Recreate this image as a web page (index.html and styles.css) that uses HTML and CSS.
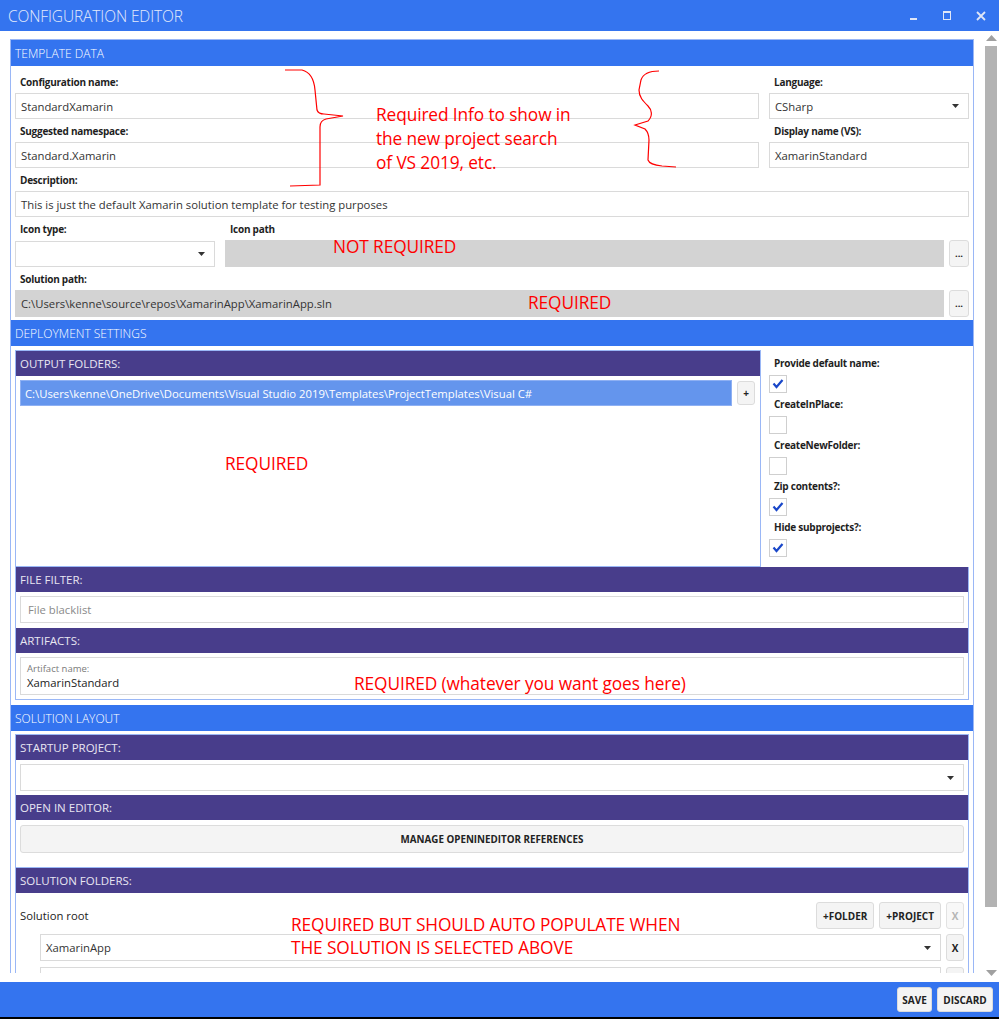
FILE: index.html
```html
<!DOCTYPE html>
<html>
<head>
<meta charset="utf-8">
<link rel="stylesheet" href="styles.css">
</head>
<body>
<div class="window">
  <header class="titlebar">
    <span class="title">CONFIGURATION EDITOR</span>
    <div class="controls">
      <span class="ctl"><svg width="34" height="31"><rect x="14" y="18" width="7" height="2" fill="#dfe6f7"/></svg></span>
      <span class="ctl"><svg width="34" height="31"><rect x="13.5" y="11.5" width="7" height="8" fill="none" stroke="#dfe6f7"/><rect x="13" y="11" width="8" height="2" fill="#dfe6f7"/></svg></span>
      <span class="ctl"><svg width="34" height="31"><path d="M13 12 L21 20 M21 12 L13 20" stroke="#dfe6f7" stroke-width="1.8"/></svg></span>
    </div>
  </header>

  <div class="main">
    <div class="content">
      <div class="viewport">
        <div class="panel">
          <div class="sec-head">TEMPLATE DATA</div>
          <div class="sec-body tmpl">
            <div class="tgrid">
              <div class="lbl">Configuration name:</div>
              <div class="lbl">Language:</div>
              <div class="field">StandardXamarin</div>
              <div class="field combo">CSharp<svg class="arrow" width="7" height="4"><polygon points="0,0 7,0 3.5,4" fill="#333"/></svg></div>
              <div class="lbl">Suggested namespace:</div>
              <div class="lbl">Display name (VS):</div>
              <div class="field">Standard.Xamarin</div>
              <div class="field">XamarinStandard</div>
            </div>
            <div class="lbl">Description:</div>
            <div class="field">This is just the default Xamarin solution template for testing purposes</div>
            <div class="irow">
              <div class="lbl w200">Icon type:</div>
              <div class="lbl">Icon path</div>
            </div>
            <div class="irow inputs">
              <div class="field combo w200"><svg class="arrow" width="7" height="4"><polygon points="0,0 7,0 3.5,4" fill="#333"/></svg></div>
              <div class="field gray grow"></div>
              <button class="btn dots">...</button>
            </div>
            <div class="lbl">Solution path:</div>
            <div class="irow inputs sp">
              <div class="field gray grow">C:\Users\kenne\source\repos\XamarinApp\XamarinApp.sln</div>
              <button class="btn dots">...</button>
            </div>
          </div>

          <div class="sec-head">DEPLOYMENT SETTINGS</div>
          <div class="sec-body deploy">
            <div class="deploy-top">
              <div class="out-box">
                <div class="sub-head">OUTPUT FOLDERS:</div>
                <div class="out-list">
                  <div class="list-item">C:\Users\kenne\OneDrive\Documents\Visual Studio 2019\Templates\ProjectTemplates\Visual C#</div>
                  <button class="btn plus">+</button>
                </div>
              </div>
              <div class="checks">
                <div class="lbl">Provide default name:</div>
                <div class="cb"><svg width="16" height="16"><path d="M3.5 7.5 L6.5 11 L12.5 4" fill="none" stroke="#1947c9" stroke-width="2.2"/></svg></div>
                <div class="lbl">CreateInPlace:</div>
                <div class="cb"></div>
                <div class="lbl">CreateNewFolder:</div>
                <div class="cb"></div>
                <div class="lbl">Zip contents?:</div>
                <div class="cb"><svg width="16" height="16"><path d="M3.5 7.5 L6.5 11 L12.5 4" fill="none" stroke="#1947c9" stroke-width="2.2"/></svg></div>
                <div class="lbl">Hide subprojects?:</div>
                <div class="cb"><svg width="16" height="16"><path d="M3.5 7.5 L6.5 11 L12.5 4" fill="none" stroke="#1947c9" stroke-width="2.2"/></svg></div>
              </div>
            </div>
            <div class="group">
              <div class="sub-head">FILE FILTER:</div>
              <div class="gbody ff">
                <div class="field tall placeholder">File blacklist</div>
              </div>
              <div class="sub-head">ARTIFACTS:</div>
              <div class="gbody art">
                <div class="field artifact">
                  <span class="small-lbl">Artifact name:</span>
                  <span>XamarinStandard</span>
                </div>
              </div>
            </div>
          </div>

          <div class="sec-head">SOLUTION LAYOUT</div>
          <div class="sec-body layout">
            <div class="group open">
              <div class="sub-head">STARTUP PROJECT:</div>
              <div class="gbody sp-body">
                <div class="field combo tall"><svg class="arrow" width="7" height="4"><polygon points="0,0 7,0 3.5,4" fill="#333"/></svg></div>
              </div>
              <div class="sub-head">OPEN IN EDITOR:</div>
              <div class="gbody oe-body">
                <button class="btn wide">MANAGE OPENINEDITOR REFERENCES</button>
              </div>
              <div class="sub-head sf">SOLUTION FOLDERS:</div>
              <div class="gbody sf-body">
                <div class="root-row">
                  <span class="root-lbl">Solution root</span>
                  <div class="root-btns">
                    <button class="btn tb">+FOLDER</button>
                    <button class="btn tb">+PROJECT</button>
                    <button class="btn tb x disabled">X</button>
                  </div>
                </div>
                <div class="child-row">
                  <div class="field combo tall grow">XamarinApp<svg class="arrow" width="7" height="4"><polygon points="0,0 7,0 3.5,4" fill="#333"/></svg></div>
                  <button class="btn tb x">X</button>
                </div>
                <div class="child-row">
                  <div class="field combo tall grow"></div>
                  <button class="btn tb x" aria-label="remove"></button>
                </div>
              </div>
            </div>
          </div>
        </div>

        <svg class="braces" width="984" height="942" viewBox="0 31 984 942">
          <path d="M285,70 L302,70 C310,72 314,78 315,90 L317,110 C318,113 320,114 324,114 L343,116 L326,119 C322,120 320,122 320,127 L320,185 L290,186" fill="none" stroke="#ff0000" stroke-width="1.2"/>
          <path d="M659,71 C650,71 643,74 641,80 L639,90 C639,97 643,101 648,106 C652,110 653,116 648,121 L635,125 L645,129 C648,132 649,135 649,140 L648,160 C649,163 652,165 662,166 L676,167" fill="none" stroke="#ff0000" stroke-width="1.2"/>
        </svg>
        <div class="note n1">Required Info to show in<br>the new project search<br>of VS 2019, etc.</div>
        <div class="note n2">NOT REQUIRED</div>
        <div class="note n3">REQUIRED</div>
        <div class="note n4">REQUIRED</div>
        <div class="note n5">REQUIRED (whatever you want goes here)</div>
        <div class="note n6">REQUIRED BUT SHOULD AUTO POPULATE WHEN<br>THE SOLUTION IS SELECTED ABOVE</div>
      </div>
    </div>
    <div class="scrollbar">
      <svg class="sb-arrow" width="15" height="8"><polygon points="2,7 13,7 7.5,1" fill="#a0a0a0"/></svg>
      <div class="thumb"></div>
      <div class="sb-space"></div>
      <svg class="sb-arrow" width="15" height="8"><polygon points="2,1 13,1 7.5,7" fill="#a0a0a0"/></svg>
    </div>
  </div>

  <footer class="footer">
    <button class="btn fb">SAVE</button>
    <button class="btn fb">DISCARD</button>
  </footer>
</div>
</body>
</html>
```

FILE: styles.css
```css
* { box-sizing: border-box; }
html, body { margin: 0; padding: 0; }
body {
  width: 999px;
  height: 1019px;
  overflow: hidden;
  background: #000;
  font-family: "Open Sans", "Noto Sans", sans-serif;
}
.window {
  height: 1017px;
  display: flex;
  flex-direction: column;
  background: #fff;
}
.titlebar {
  height: 31px;
  flex: none;
  background: #3474ef;
  display: flex;
  align-items: center;
  justify-content: space-between;
  padding-left: 8px;
  padding-right: 1px;
}
.title {
  color: #e4ebfb;
  font-weight: 300;
  font-size: 15.5px;
  letter-spacing: -0.1px;
}
.controls { display: flex; }
.ctl { width: 34px; height: 31px; display: block; }
.ctl svg { display: block; }

.main { flex: 1; display: flex; min-height: 0; }
.content { flex: 1; display: flex; flex-direction: column; padding-bottom: 9px; min-width: 0; }
.viewport {
  flex: 1;
  position: relative;
  overflow: hidden;
  padding: 8px 10px 0 10px;
}
.panel { border: 1px solid #9ab7f6; border-bottom: none; }

.sec-head {
  height: 26px;
  background: #3474ef;
  color: #fff;
  font-weight: 300;
  font-size: 12px;
  padding-left: 4px;
  display: flex;
  align-items: center;
}
.sec-body { padding: 4px 4px 3px; }

.lbl {
  height: 23px;
  padding: 4px 0 0 5px;
  font-size: 10px;
  font-weight: 700;
  line-height: 16px;
  letter-spacing: -0.25px;
  color: #1e1e1e;
  white-space: nowrap;
}
.field {
  height: 26px;
  border: 1px solid #dadada;
  background: #fff;
  padding: 0 5px;
  display: flex;
  align-items: center;
  font-size: 11.3px;
  color: #333;
  white-space: nowrap;
  overflow: hidden;
  position: relative;
}
.field.tall { height: 27px; }
.field.gray { background: #d3d3d3; border-color: #d3d3d3; height: 27px; }
.field.combo .arrow { position: absolute; right: 9px; top: 50%; margin-top: -2px; }
.field.placeholder { color: #8a8a8a; padding-left: 7px; }

.tgrid {
  display: grid;
  grid-template-columns: 1fr 200px;
  column-gap: 10px;
}
.irow { display: flex; gap: 10px; }
.irow.inputs { height: 27px; gap: 0; align-items: flex-end; }
.irow.inputs .grow { margin-left: 10px; }
.irow.inputs.sp .grow { margin-left: 0; }
.w200 { width: 200px; flex: none; }
.grow { flex: 1; }

.btn {
  font-family: "Open Sans", "Noto Sans", sans-serif;
  background: #f4f4f4;
  border: 1px solid #dcdcdc;
  border-radius: 3px;
  color: #222;
  font-weight: 700;
  font-size: 9.5px;
  padding: 0;
  margin: 0;
  display: flex;
  align-items: center;
  justify-content: center;
  flex: none;
}
.btn.dots { width: 20px; height: 27px; margin-left: 5px; line-height: 1; }

/* deployment */
.sec-body.deploy { padding: 4px 4px 5px; }
.deploy-top { display: flex; height: 217px; }
.out-box {
  width: 746px;
  flex: none;
  border: 1px solid #9ab7f6;
  display: flex;
  flex-direction: column;
}
.sub-head {
  height: 25px;
  flex: none;
  background: #483d8b;
  color: #e8e6f2;
  font-size: 11.5px;
  padding-left: 4px;
  display: flex;
  align-items: center;
}
.out-list { display: flex; padding: 4px 5px 4px 4px; gap: 5px; align-items: flex-start; }
.list-item {
  flex: 1;
  height: 26px;
  background: #6495ed;
  color: #fff;
  font-size: 11.3px;
  padding-left: 4px;
  display: flex;
  align-items: center;
  white-space: nowrap;
  overflow: hidden;
  border: 1px solid #8eb0f3;
}
.btn.plus { width: 18px; height: 24px; margin-top: 1px; font-size: 10px; }

.checks { flex: 1; padding-left: 8px; padding-top: 2px; }
.checks .lbl { padding-left: 5px; height: 22px; padding-top: 3px; }
.cb {
  width: 18px;
  height: 18px;
  margin-top: 1px;
  border: 1px solid #cfcfcf;
  background: #fff;
}
.cb svg { display: block; }

.group { border-left: 1px solid #9ab7f6; border-right: 1px solid #9ab7f6; border-bottom: 1px solid #9ab7f6; }
.gbody { padding: 4px 4px 4px; }
.gbody.ff { padding: 4px 4px 5px; }
.gbody.art { padding: 4px 4px 4px; }
.field.artifact {
  height: 38px;
  flex-direction: column;
  align-items: flex-start;
  justify-content: center;
  padding-left: 6px;
  color: #222;
  line-height: 16px;
}
.small-lbl { font-size: 9.5px; color: #7a7a7a; line-height: 13px; }

/* solution layout */
.sec-body.layout { padding: 3px 4px 0; }
.group.open { border-top: 1px solid #9ab7f6; border-bottom: none; }
.sp-body { padding: 4px 4px 4px; }
.oe-body { padding: 5px 4px 14px; }
.btn.wide { width: 100%; height: 28px; font-size: 9.8px; }
.sub-head.sf { border-top: 1px solid #9ab7f6; height: 26px; }
.sf-body { padding: 9px 4px 0; }
.root-row { display: flex; justify-content: space-between; align-items: center; height: 27px; }
.root-lbl { font-size: 11.3px; color: #222; padding-left: 0; }
.root-btns { display: flex; gap: 5px; }
.btn.tb { height: 27px; padding: 0 6px; font-size: 10px; }
.btn.x { width: 18px; padding: 0; }
.btn.disabled { color: #b5b5b5; border-color: #e2e2e2; background: #f8f8f8; }
.child-row { display: flex; gap: 5px; margin-left: 20px; margin-top: 5px; margin-right: 0; }
.child-row + .child-row { margin-top: 6px; }

/* annotations */
.braces { position: absolute; left: 0; top: 0; pointer-events: none; }
.note {
  position: absolute;
  color: #ff0000;
  font-size: 17.3px;
  line-height: 24px;
  letter-spacing: -0.1px;
  white-space: nowrap;
}
.n1 { left: 376px; top: 72px; }
.n2 { left: 333px; top: 204px; }
.n3 { left: 528px; top: 260px; }
.n4 { left: 225px; top: 421px; }
.n5 { left: 354px; top: 641px; }
.n6 { left: 291px; top: 882px; line-height: 23px; }

/* scrollbar */
.scrollbar {
  width: 15px;
  flex: none;
  display: flex;
  flex-direction: column;
  padding: 3px 0 5px;
  background: #fff;
}
.sb-arrow { display: block; flex: none; }
.thumb { height: 861px; margin: 4px 2px 0 1px; background: #b3b3b3; flex: none; }
.sb-space { flex: 1; }

/* footer */
.footer {
  height: 35px;
  flex: none;
  background: #3474ef;
  display: flex;
  justify-content: flex-end;
  align-items: center;
  gap: 5px;
  padding-right: 6px;
}
.btn.fb { height: 25px; padding: 0 6px; font-size: 10px; }
.btn.fb:first-child { width: 35px; }
.btn.fb:last-child { width: 56px; }
```
